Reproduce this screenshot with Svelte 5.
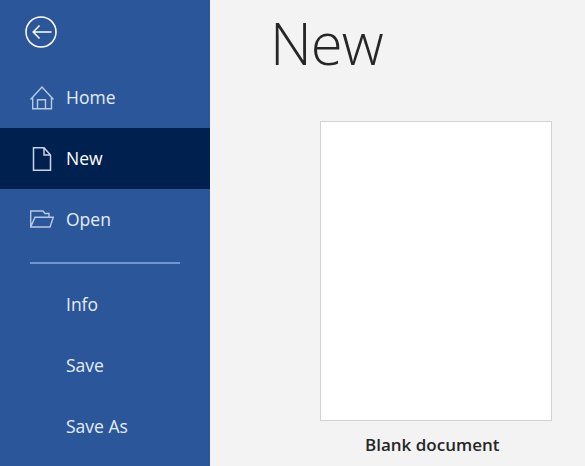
<script lang="ts">
  const primary = [
    { label: 'Home', icon: 'home' },
    { label: 'New', icon: 'new', active: true },
    { label: 'Open', icon: 'open' },
  ];
  const secondary = ['Info', 'Save', 'Save As'];
</script>

<div class="backstage">
  <nav class="sidebar">
    <button type="button" class="back" aria-label="Back">
      <svg width="32" height="32" viewBox="0 0 32 32" fill="none" stroke="#fff" stroke-width="1.5">
        <circle cx="16" cy="16" r="15" />
        <path d="M8.500 16H26.500M14.500 9.500L8.200 16l6.300 6.500" />
      </svg>
    </button>

    {#each primary as item}
      <div class="item" class:active={item.active}>
        <span class="icon">
          {#if item.icon === 'home'}
            <svg width="24" height="24" viewBox="0 0 24 24" fill="none" stroke="#b8c9e3" stroke-width="1.4">
              <path d="M.5 13.500L12 1 23.500 13.500M2.700 11V22.800H21.500V11M7.500 22.800V13.800H15.500V22.800" />
            </svg>
          {:else if item.icon === 'new'}
            <svg width="24" height="24" viewBox="0 0 24 24" fill="none" stroke="#c7d3e6" stroke-width="1.5">
              <path d="M3.500.7H14L20.500 8V23.300H3.500ZM14 .7V8H20.500" />
            </svg>
          {:else}
            <svg width="24" height="24" viewBox="0 0 24 24" fill="none" stroke="#b8c9e3" stroke-width="1.4">
              <path d="M.7 19V3H13L15 5.500H19V9.200M5 9.200H23.300L20 19H.7Z" />
            </svg>
          {/if}
        </span>
        <span class="label">{item.label}</span>
      </div>
    {/each}

    <div class="divider"></div>

    {#each secondary as label}
      <div class="item">
        <span class="icon"></span>
        <span class="label">{label}</span>
      </div>
    {/each}
  </nav>

  <main class="content">
    <h1>New</h1>
    <div class="template">
      <div class="page"></div>
      <div class="caption">Blank document</div>
    </div>
  </main>
</div>

<style>
  :global(body) {
    margin: 0;
    overflow: hidden;
  }

  .backstage {
    display: flex;
    width: 585px;
    height: 466px;
    overflow: hidden;
    background: #f3f3f3;
    font-family: 'Open Sans', 'Noto Sans', sans-serif;
  }

  .sidebar {
    flex: 0 0 210px;
    display: flex;
    flex-direction: column;
    background: #2b579a;
    color: #fff;
  }

  .back {
    align-self: flex-start;
    display: flex;
    height: 67px;
    margin: 0;
    padding: 16px 0 0 25px;
    border: 0;
    background: none;
  }

  .item {
    flex: 0 0 61px;
    display: flex;
    align-items: center;
    gap: 6px;
    padding-left: 30px;
    box-sizing: border-box;
    color: #e4ecf7;
  }

  .item.active {
    background: #002050;
    color: #fff;
  }

  .icon {
    flex: 0 0 30px;
    display: flex;
    height: 24px;
  }

  .label {
    padding-bottom: 2px;
    font-size: 17.500px;
    line-height: 24px;
  }

  .divider {
    height: 2px;
    width: 150px;
    margin: 12px 0 10px 30px;
    background: #7096cf;
  }

  .content {
    flex: 1;
    display: flex;
    flex-direction: column;
    padding-left: 60px;
    color: #262626;
  }

  h1 {
    margin: 0;
    height: 121px;
    font-family: 'Open Sans', sans-serif;
    font-size: 58px;
    font-weight: 300;
    letter-spacing: -1px;
    line-height: 85px;
  }

  .template {
    display: flex;
    flex-direction: column;
    width: 232px;
    margin-left: 50px;
  }

  .page {
    box-sizing: border-box;
    width: 232px;
    height: 300px;
    background: #fff;
    border: 1px solid #d2d2d2;
  }

  .caption {
    margin-top: 12px;
    padding-left: 45px;
    font-size: 17px;
    font-weight: 600;
    line-height: 24px;
    white-space: nowrap;
  }
</style>
